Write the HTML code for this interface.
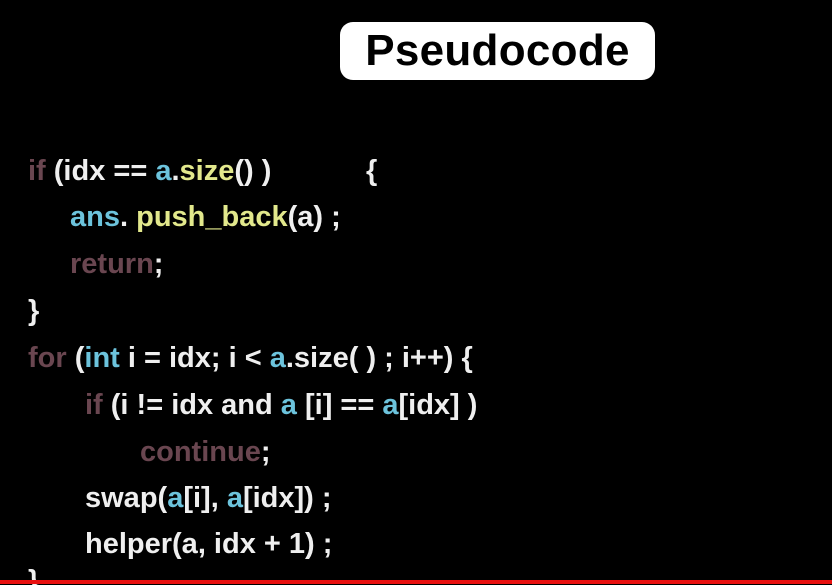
<!DOCTYPE html>
<html><head><meta charset="utf-8"><style>
html,body{margin:0;padding:0;background:#000;width:832px;height:585px;overflow:hidden;position:relative}
.hdr{position:absolute;left:340px;top:22px;width:315px;height:58px;background:#fff;border-radius:13px;font:bold 44px "Liberation Sans",sans-serif;color:#000;text-align:center;line-height:58px;letter-spacing:0.3px}
.l{position:absolute;white-space:pre;font:bold 29px "Liberation Sans",sans-serif;color:#efefef;letter-spacing:0px;line-height:30px}
.k{color:#6a4650}.c{color:#6cc3dc}.y{color:#e2e88c}
.red{position:absolute;left:0;top:580px;width:832px;height:4px;background:#e8100f}
</style></head><body>
<div class="hdr">Pseudocode</div>
<div class="l" style="left:28px;top:156px"><span class="k">if</span> (idx == <span class="c">a</span>.<span class="y">size</span>() )</div>
<div class="l" style="left:366px;top:156px">{</div>
<div class="l" style="left:70px;top:202px"><span class="c">ans</span>. <span class="y">push_back</span>(a) ;</div>
<div class="l" style="left:70px;top:249px"><span class="k">return</span>;</div>
<div class="l" style="left:28px;top:296px">}</div>
<div class="l" style="left:28px;top:343px"><span class="k">for</span> (<span class="c">int</span> i = idx; i &lt; <span class="c">a</span>.size( ) ; i++) {</div>
<div class="l" style="left:85px;top:390px"><span class="k">if</span> (i != idx and <span class="c">a</span> [i] == <span class="c">a</span>[idx] )</div>
<div class="l" style="left:140px;top:437px"><span class="k">continue</span>;</div>
<div class="l" style="left:85px;top:483px">swap(<span class="c">a</span>[i], <span class="c">a</span>[idx]) ;</div>
<div class="l" style="left:85px;top:529px">helper(a, idx + 1) ;</div>
<div class="l" style="left:28px;top:566px">}</div>
<div class="red"></div>
</body></html>
